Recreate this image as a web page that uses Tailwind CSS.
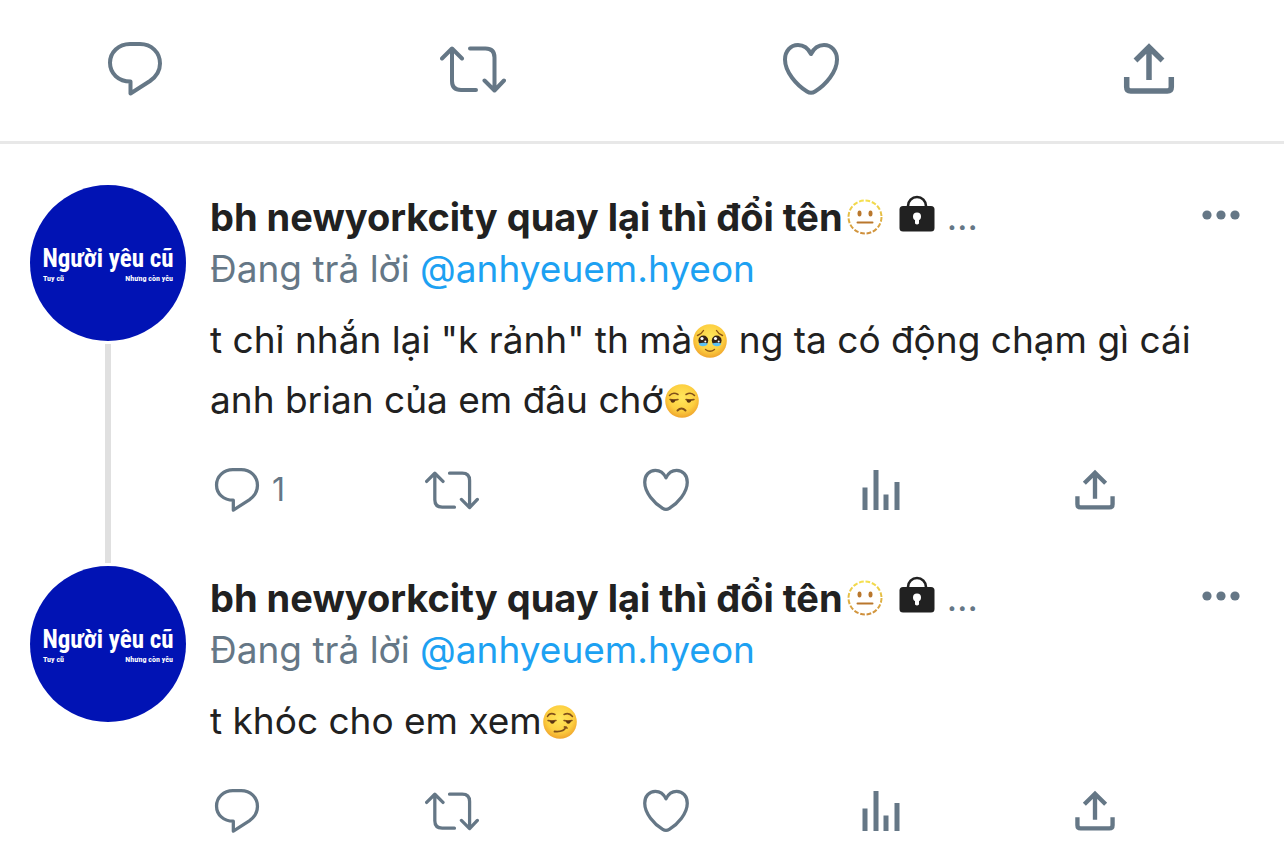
<!DOCTYPE html>
<html lang="vi">
  <head>
    <meta charset="UTF-8">
    <meta name="viewport" content="width=device-width, initial-scale=1.0">
    <title>bh newyorkcity</title>
    <script src="https://cdn.jsdelivr.net/npm/@tailwindcss/browser@4"></script>
  </head>

  <body class="bg-white font-['Inter','Noto_Sans',sans-serif] text-[37px] text-[#212121]">

    <!-- Icons -->
    <svg class="absolute w-0 h-0" aria-hidden="true">
      <defs>
        <radialGradient id="face" cx="50%" cy="40%" r="60%">
          <stop offset="0" stop-color="#ffe75c"/>
          <stop offset="0.65" stop-color="#fdd041"/>
          <stop offset="1" stop-color="#f0a52d"/>
        </radialGradient>
        <linearGradient id="dash" x1="0" y1="0" x2="0" y2="1">
          <stop offset="0" stop-color="#f5e04e"/>
          <stop offset="1" stop-color="#cf8f3c"/>
        </linearGradient>
      </defs>
      <symbol id="i-comment" viewBox="0 0 66 66">
        <path fill="none" stroke="currentColor" stroke-width="4" stroke-linejoin="round" d="M28 8H38C49.5 8 58 16.5 58 27.5C58 35 54.5 40.5 48 45L28.5 57.5V45.5C16.5 45.5 8 37.5 8 26.8C8 16.5 16.5 8 28 8Z"/>
      </symbol>
      <symbol id="i-retweet" viewBox="0 0 66 66">
        <path fill="none" stroke="currentColor" stroke-width="4" stroke-linecap="round" stroke-linejoin="round" d="M2 22.5L12 12.5L22 22.5M12 13V45Q12 54 21 54H36M30 12.5H45.5Q54.5 12.5 54.5 21.5V53.5M44.5 44.5L54.5 54.5L64 44.5"/>
      </symbol>
      <symbol id="i-heart" viewBox="0 0 66 66">
        <path fill="none" stroke="currentColor" stroke-width="4" stroke-linejoin="round" d="M33 18C30.5 13 26 9 20 9C12.5 9 7 15 7 23.5C7 36 18.5 49 29 55.5Q33 58 37 55.5C47.5 49 59 36 59 23.5C59 15 53.5 9 46 9C40 9 35.5 13 33 18Z"/>
      </symbol>
      <symbol id="i-share" viewBox="0 0 66 66">
        <path fill="none" stroke="currentColor" stroke-width="5.5" d="M19.5 24.5L33 11.2L46.5 24.5M33 12V44M10.7 41V51Q10.7 55 14.7 55H51.3Q55.3 55 55.3 51V41"/>
      </symbol>
      <symbol id="i-stats" viewBox="0 0 54 54">
        <path fill="currentColor" d="M8.5 24.5h5v22.5h-5zM19.5 7h5v40h-5zM29.5 31.5h5v15.5h-5zM40.5 19h5v28h-5z"/>
      </symbol>
      <symbol id="i-dots" viewBox="0 0 38 10">
        <g fill="currentColor"><circle cx="5" cy="5" r="4.6"/><circle cx="19" cy="5" r="4.6"/><circle cx="33" cy="5" r="4.6"/></g>
      </symbol>
      <symbol id="i-lock" viewBox="0 0 36 38">
        <path fill="none" stroke="currentColor" stroke-width="2.6" d="M9 13V11A9 9 0 0 1 27 11V13"/>
        <rect x="0.5" y="11" width="35" height="25.5" rx="3.5" fill="currentColor"/>
        <circle cx="18" cy="21.5" r="4" fill="#fff"/>
        <path fill="#fff" d="M16 22h4v6.5q-2 2-4 0z"/>
      </symbol>
      <symbol id="e-dotted" viewBox="0 0 36 36">
        <circle cx="18" cy="18" r="16.5" fill="none" stroke="url(#dash)" stroke-width="2" stroke-dasharray="4.7 1.78"/>
        <ellipse cx="12.5" cy="14.5" rx="2" ry="3" fill="#b9772c"/>
        <ellipse cx="23.5" cy="14.5" rx="2" ry="3" fill="#b9772c"/>
        <path stroke="#b9772c" stroke-width="2" stroke-linecap="round" d="M10.5 23.5H25.5"/>
      </symbol>
      <symbol id="e-pleading" viewBox="0 0 36 36">
        <circle cx="18" cy="18" r="16.8" fill="url(#face)"/>
        <g fill="none" stroke="#8a5415" stroke-width="1.4" stroke-linecap="round">
          <path d="M5.5 12.5Q9.5 11 11.5 7.5M30.5 12.5Q26.5 11 24.5 7.5"/>
          <path d="M13.5 26.5Q18 30 22.5 26.5"/>
        </g>
        <circle cx="11.3" cy="17.5" r="4.9" fill="#352317"/>
        <circle cx="24.7" cy="17.5" r="4.9" fill="#352317"/>
        <path fill="#5cc1f2" d="M6.8 20.5Q11.3 19 15.8 20.5Q14.8 23.3 11 23.3T6.8 20.5zM20.2 20.5Q24.7 19 29.2 20.5Q28.7 23.3 25 23.3T20.2 20.5z"/>
        <g fill="#fff"><circle cx="10" cy="15.5" r="1.6"/><circle cx="23.5" cy="15.5" r="1.6"/><circle cx="13.3" cy="18.5" r="1"/><circle cx="26.7" cy="18.5" r="1"/></g>
      </symbol>
      <symbol id="e-unamused" viewBox="0 0 36 36">
        <circle cx="18" cy="18" r="16.8" fill="url(#face)"/>
        <g fill="none" stroke="#80501a" stroke-width="1.5" stroke-linecap="round">
          <path d="M5.5 12.5Q9 8.5 14 11.5M22 11.5Q27 8.5 30.5 12.5"/>
          <path d="M6 16.5Q10 17.5 14 16.5M22 16.5Q26 17.5 30 16.5"/>
          <path stroke-width="2" d="M13.5 27.5Q17.5 23.5 21.5 27.5"/>
        </g>
        <path fill="#5a3512" d="M6.5 16.8h5q-.5 3-2.7 3T6.5 16.8zM22.5 16.8h5q-.5 3-2.7 3T22.5 16.8z"/>
      </symbol>
      <symbol id="e-smirk" viewBox="0 0 36 36">
        <circle cx="18" cy="18" r="16.8" fill="url(#face)"/>
        <g fill="none" stroke="#80501a" stroke-width="1.5" stroke-linecap="round">
          <path d="M5.5 12.5Q8 8 13 10.5M22 10.5Q27 8 30.5 12.5"/>
          <path d="M6 16.5Q10 17.5 14 16.5M22 16.5Q26 17.5 30 16.5"/>
          <path stroke-width="1.8" d="M12.5 27.5Q21.5 28.5 24 23M22.5 23L25 24"/>
        </g>
        <path fill="#5a3512" d="M8 16.8h5q-.5 3-2.7 3T8 16.8zM24 16.8h5q-.5 3-2.7 3T24 16.8z"/>
      </symbol>
    </svg>

    <header class="flex justify-between px-[102px] pt-9 pb-[39px] border-b-3 border-[#e8e8e8] text-[#657786]">
      <button aria-label="Trả lời"><svg class="size-[66px]"><use href="#i-comment"/></svg></button>
      <button aria-label="Tweet lại"><svg class="size-[66px]"><use href="#i-retweet"/></svg></button>
      <button aria-label="Thích"><svg class="size-[66px]"><use href="#i-heart"/></svg></button>
      <button aria-label="Chia sẻ"><svg class="size-[66px]"><use href="#i-share"/></svg></button>
    </header>

    <main class="pt-[41px]">

      <article class="flex pl-[30px]">
        <div class="flex flex-col items-center shrink-0">
          <div class="size-[156px] rounded-full bg-[#0113b4] text-white px-[13px] pt-1 flex flex-col items-center justify-center font-['Liberation_Sans_Narrow','Roboto_Condensed','Roboto',sans-serif] font-bold">
            <div class="text-[25px] leading-7 whitespace-nowrap">Người yêu cũ</div>
            <div class="w-full flex justify-between text-[8px] leading-3"><span>Tuy cũ</span><span>Nhưng còn yêu</span></div>
          </div>
          <div class="w-[6px] grow my-[3px] bg-[#e0e0e0]"></div>
        </div>
        <div class="grow min-w-0 pl-6 pt-[6px] pb-[49px]">
          <div class="flex items-center leading-[52px] pr-11">
            <h2 class="font-bold text-[38px] whitespace-nowrap">bh newyorkcity quay lại thì đổi tên</h2>
            <svg class="size-9 ml-1 shrink-0"><use href="#e-dotted"/></svg>
            <svg class="w-9 h-[38px] ml-4 mb-[6px] shrink-0"><use href="#i-lock"/></svg>
            <span class="ml-3 text-[36px] text-[#657786]">…</span>
            <button class="ml-auto mb-1 text-[#657786]" aria-label="Thêm"><svg class="w-[38px] h-[10px]"><use href="#i-dots"/></svg></button>
          </div>
          <p class="leading-[52px] text-[#657786]">Đang trả lời <a href="#" class="text-[#1da1f2]">@anhyeuem.hyeon</a></p>
          <p class="mt-[15px] leading-[60px] pr-16">t chỉ nhắn lại "k rảnh" th mà<svg class="inline size-9 align-[-6px]"><use href="#e-pleading"/></svg> ng ta có động chạm gì cái anh brian của em đâu chớ<svg class="inline size-9 align-[-6px]"><use href="#e-unamused"/></svg></p>
          <div class="mt-[33px] flex justify-between pr-[162px] text-[#657786]">
            <button class="relative" aria-label="Trả lời 1"><svg class="size-[54px]"><use href="#i-comment"/></svg><span class="absolute left-full top-0 ml-2 leading-[54px] text-[32px]">1</span></button>
            <button aria-label="Tweet lại"><svg class="size-[54px]"><use href="#i-retweet"/></svg></button>
            <button aria-label="Thích"><svg class="size-[54px]"><use href="#i-heart"/></svg></button>
            <button aria-label="Thống kê"><svg class="size-[54px]"><use href="#i-stats"/></svg></button>
            <button aria-label="Chia sẻ"><svg class="size-[52px] m-px"><use href="#i-share"/></svg></button>
          </div>
        </div>
      </article>

      <article class="flex pl-[30px]">
        <div class="shrink-0">
          <div class="size-[156px] rounded-full bg-[#0113b4] text-white px-[13px] pt-1 flex flex-col items-center justify-center font-['Liberation_Sans_Narrow','Roboto_Condensed','Roboto',sans-serif] font-bold">
            <div class="text-[25px] leading-7 whitespace-nowrap">Người yêu cũ</div>
            <div class="w-full flex justify-between text-[8px] leading-3"><span>Tuy cũ</span><span>Nhưng còn yêu</span></div>
          </div>
        </div>
        <div class="grow min-w-0 pl-6 pt-[6px]">
          <div class="flex items-center leading-[52px] pr-11">
            <h2 class="font-bold text-[38px] whitespace-nowrap">bh newyorkcity quay lại thì đổi tên</h2>
            <svg class="size-9 ml-1 shrink-0"><use href="#e-dotted"/></svg>
            <svg class="w-9 h-[38px] ml-4 mb-[6px] shrink-0"><use href="#i-lock"/></svg>
            <span class="ml-3 text-[36px] text-[#657786]">…</span>
            <button class="ml-auto mb-1 text-[#657786]" aria-label="Thêm"><svg class="w-[38px] h-[10px]"><use href="#i-dots"/></svg></button>
          </div>
          <p class="leading-[52px] text-[#657786]">Đang trả lời <a href="#" class="text-[#1da1f2]">@anhyeuem.hyeon</a></p>
          <p class="mt-[15px] leading-[60px] pr-16">t khóc cho em xem<svg class="inline size-9 align-[-6px]"><use href="#e-smirk"/></svg></p>
          <div class="mt-[33px] flex justify-between pr-[162px] text-[#657786]">
            <button aria-label="Trả lời"><svg class="size-[54px]"><use href="#i-comment"/></svg></button>
            <button aria-label="Tweet lại"><svg class="size-[54px]"><use href="#i-retweet"/></svg></button>
            <button aria-label="Thích"><svg class="size-[54px]"><use href="#i-heart"/></svg></button>
            <button aria-label="Thống kê"><svg class="size-[54px]"><use href="#i-stats"/></svg></button>
            <button aria-label="Chia sẻ"><svg class="size-[52px] m-px"><use href="#i-share"/></svg></button>
          </div>
        </div>
      </article>

    </main>

  </body>
</html>
